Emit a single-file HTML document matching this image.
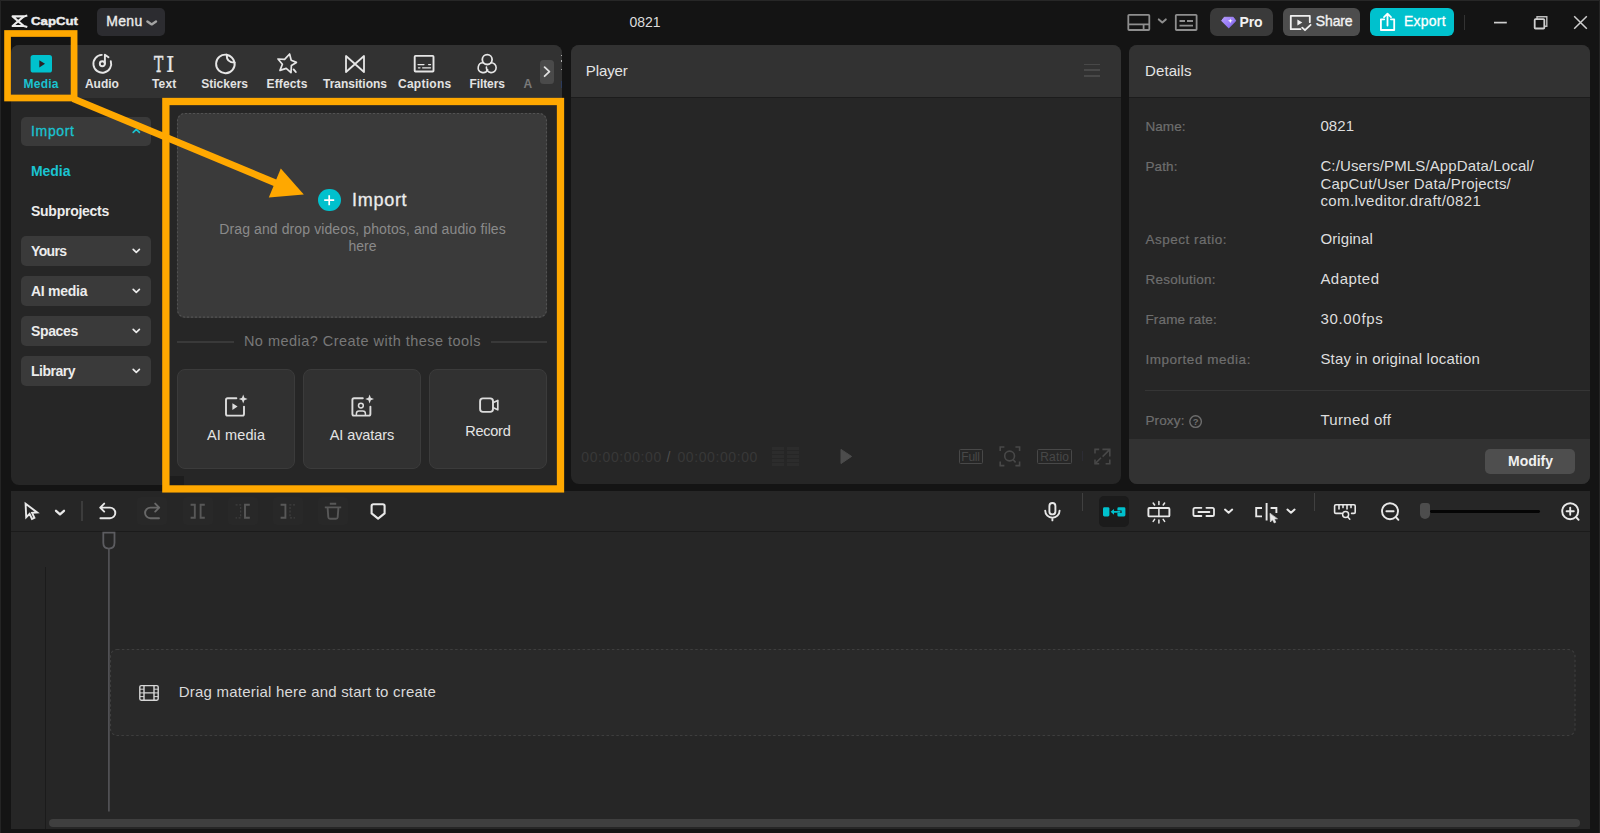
<!DOCTYPE html>
<html lang="en"><head><meta charset="utf-8"><title>CapCut - 0821</title>
<style>
html,body{margin:0;padding:0;}
body{width:1600px;height:833px;overflow:hidden;background:#141414;position:relative;font-family:"Liberation Sans",sans-serif;}
.a{position:absolute;box-sizing:border-box;}
.t{position:absolute;white-space:nowrap;line-height:20px;height:20px;}
svg{overflow:visible;}
</style></head><body>
<div class="a" style="left:0px;top:0px;width:1600px;height:1px;background:#272727;"></div>
<div class="a" style="left:0px;top:0px;width:1px;height:833px;background:#242424;"></div>
<div class="a" style="left:1599px;top:0px;width:1px;height:833px;background:#242424;"></div>
<svg class="a" style="left:0px;top:0px;" width="90" height="40" viewBox="0 0 90 40" fill="none"><g stroke="#ececec" stroke-width="2.1" stroke-linejoin="round" stroke-linecap="butt"><path d="M27.3 15.4 L23.8 16.4 H12.6 L23.8 26 L27.3 27"/><path d="M23.8 16.4 L12.6 26 H23.8"/></g></svg>
<div class="t" style="left:31.40px;top:10.61px;font-size:11.8px;color:#ececec;font-weight:bold;-webkit-text-stroke:0.45px #ececec;transform:scaleX(1.12);transform-origin:0 50%;">CapCut</div>
<div class="a" style="left:96.5px;top:8.3px;width:68.5px;height:27.7px;background:#2c2c30;border-radius:5px;"></div>
<div class="t" style="left:106.20px;top:11.45px;font-size:14px;color:#ececec;letter-spacing:0.326px;-webkit-text-stroke:0.35px #ececec;">Menu</div>
<svg class="a" style="left:0px;top:0px;" width="200" height="40" viewBox="0 0 200 40" fill="none"><path d="M147.4 21.4 L151.7 24.4 L156 21.4" stroke="#a4a4a4" stroke-width="2.4" stroke-linecap="round" stroke-linejoin="round"/></svg>
<div class="t" style="left:629.40px;top:11.75px;font-size:14px;color:#dcdcdc;letter-spacing:0.018px;">0821</div>
<svg class="a" style="left:1120px;top:0px;" width="90" height="40" viewBox="0 0 90 40" fill="none"><g stroke="#8e8e8e" stroke-width="1.8">
<rect x="8.3" y="14.8" width="21" height="15.2" rx="0.8"/>
<path d="M8.3 24.4 H29.3 M23.6 24.4 V30"/>
<path d="M38.8 19.4 L42.3 22.4 L45.8 19.4" stroke-width="2" stroke-linecap="round" stroke-linejoin="round"/>
<rect x="55.8" y="14.8" width="20.8" height="15.2" rx="0.8"/>
<path d="M59.5 21 H65 M67 21 H73 M59.5 25.6 H73"/>
</g></svg>
<div class="a" style="left:1210px;top:8.1px;width:62.5px;height:28.1px;background:#3a3a3a;border-radius:7px;"></div>
<svg class="a" style="left:1218px;top:12px;" width="22" height="20" viewBox="0 0 22 20" fill="none"><defs><linearGradient id="pg" x1="0" y1="0" x2="1" y2="1"><stop offset="0" stop-color="#b79cff"/><stop offset="1" stop-color="#7f63f0"/></linearGradient></defs>
<path d="M6.2 5.3 H15.2 L17.8 8.8 L10.7 15.9 L3.6 8.8 Z" fill="url(#pg)" stroke="url(#pg)" stroke-width="1" stroke-linejoin="round"/>
<path d="M12.3 6.4 L12.9 8.2 L14.7 8.8 L12.9 9.4 L12.3 11.2 L11.7 9.4 L9.9 8.8 L11.7 8.2 Z" fill="#fff"/></svg>
<div class="t" style="left:1239.60px;top:12.45px;font-size:14px;color:#f2f2f2;font-weight:bold;letter-spacing:-0.169px;">Pro</div>
<div class="a" style="left:1282.5px;top:8.1px;width:77.90000000000009px;height:28.1px;background:#4d4d4d;border-radius:6px;"></div>
<svg class="a" style="left:1286px;top:10px;" width="30" height="26" viewBox="0 0 30 26" fill="none"><g stroke="#f0f0f0" stroke-width="1.8" stroke-linejoin="round" stroke-linecap="round">
<path d="M14.5 19.2 H4.8 V5.8 H23.8 V12.2"/>
<path d="M16.2 17.6 L19 20.2 L24.6 14.8"/></g>
<path d="M11.4 9.6 L16.3 12.5 L11.4 15.4 Z" fill="#f0f0f0"/></svg>
<div class="t" style="left:1315.80px;top:11.45px;font-size:14px;color:#f2f2f2;letter-spacing:-0.140px;-webkit-text-stroke:0.35px #f2f2f2;">Share</div>
<div class="a" style="left:1370px;top:8.1px;width:84px;height:28.199999999999996px;background:#00c1cd;border-radius:6px;"></div>
<svg class="a" style="left:1376px;top:10px;" width="24" height="24" viewBox="0 0 24 24" fill="none"><g stroke="#fff" stroke-width="1.8" stroke-linejoin="round" stroke-linecap="round">
<path d="M8.2 9.3 H4.9 V20 H18.2 V9.3 H14.9"/><path d="M11.5 15.5 V3.8 M8 7.2 L11.5 3.7 L15 7.2"/></g></svg>
<div class="t" style="left:1403.90px;top:11.45px;font-size:14px;color:#ffffff;letter-spacing:0.268px;-webkit-text-stroke:0.3px #ffffff;">Export</div>
<div class="a" style="left:1464px;top:15px;width:1px;height:15px;background:#333333;"></div>
<svg class="a" style="left:1480px;top:0px;" width="120" height="40" viewBox="0 0 120 40" fill="none"><g stroke="#cfcfcf" stroke-width="1.5">
<path d="M14 22.6 H26.8" stroke-width="1.7"/>
<path d="M57 19.2 V16.8 H66.8 V26.2 H64.3" stroke-width="1.4" stroke="#bdbdbd"/>
<rect x="54.7" y="19.2" width="9.6" height="9.3" rx="0.8" stroke-width="1.8"/>
<path d="M94.2 16.2 L106.8 28.8 M106.8 16.2 L94.2 28.8"/>
</g></svg>
<div class="a" style="left:11px;top:45px;width:551px;height:440px;background:#262626;border-radius:8px;"></div>
<div class="a" style="left:11px;top:45px;width:551px;height:53px;background:#323232;border-radius:8px 8px 0 0;"></div>
<div class="t" style="left:23.50px;top:73.54px;font-size:12px;color:#1ac3d1;font-weight:bold;letter-spacing:0.248px;">Media</div>
<div class="t" style="left:85.00px;top:73.54px;font-size:12px;color:#e2e2e2;font-weight:bold;letter-spacing:-0.048px;">Audio</div>
<div class="t" style="left:151.95px;top:73.54px;font-size:12px;color:#e2e2e2;font-weight:bold;letter-spacing:0.172px;">Text</div>
<div class="t" style="left:201.20px;top:73.54px;font-size:12px;color:#e2e2e2;font-weight:bold;letter-spacing:0.014px;">Stickers</div>
<div class="t" style="left:266.50px;top:73.54px;font-size:12px;color:#e2e2e2;font-weight:bold;letter-spacing:0.131px;">Effects</div>
<div class="t" style="left:323.00px;top:73.54px;font-size:12px;color:#e2e2e2;font-weight:bold;">Transitions</div>
<div class="t" style="left:398.00px;top:73.54px;font-size:12px;color:#e2e2e2;font-weight:bold;letter-spacing:0.267px;">Captions</div>
<div class="t" style="left:469.40px;top:73.54px;font-size:12px;color:#e2e2e2;font-weight:bold;letter-spacing:-0.069px;">Filters</div>
<div class="t" style="left:523.60px;top:73.54px;font-size:12px;color:#7a7a7a;font-weight:bold;">A</div>
<svg class="a" style="left:0px;top:45px;" width="570" height="55" viewBox="0 0 570 55" fill="none">
<rect x="30.6" y="10" width="21.4" height="17.6" rx="2.6" fill="#00c1cd"/>
<path d="M39.3 15.2 L45 18.8 L39.3 22.4 Z" fill="#2a2226"/>
<g stroke="#e6e6e6" stroke-width="1.9" stroke-linecap="round" stroke-linejoin="round">
<!-- audio -->
<path d="M110.8 16.1 A8.9 8.9 0 1 1 101.8 9.9"/>
<circle cx="102.3" cy="18.8" r="2.5"/>
<path d="M104.9 18.8 V9.7 L108.5 12.3"/>
<!-- stickers -->
<path d="M226.6 9.7 A9.3 9.3 0 1 0 234.6 17.6"/>
<path d="M226.6 9.7 C226.6 14.6 229.4 17.6 234.6 17.6 C233.6 13.6 230.8 10.6 226.6 9.7 Z"/>
<!-- effects -->
<path d="M289.6 9 L291.2 15.2 L296.4 17.4 L291.4 20.4 L291 27.6 L286.2 23.4 L280 25.4 L282.4 19.2 L278 14 L284.6 14.4 Z" stroke-width="1.7"/>
<path d="M293.6 24.4 L295.8 27"/>
<!-- transitions -->
<path d="M346 11 V27 L364 11 V27 Z" stroke-width="1.8"/>
<!-- captions -->
<rect x="414.7" y="10.9" width="18.8" height="15.6" rx="0.8" stroke-width="1.9"/>
<path d="M418 19.6 H424 M428.6 19.6 H430.6 M418.4 22.8 H420 M422.6 22.8 H430.6" stroke-width="1.2"/>
<!-- filters -->
<circle cx="487.2" cy="14.6" r="4.9" stroke-width="1.8"/>
<path d="M483.4 17.8 A4.9 4.9 0 1 0 487.6 24.6" stroke-width="1.6"/>
<path d="M491 17.8 A4.9 4.9 0 1 1 486.4 22" stroke-width="1.6"/>
</g></svg>
<div class="t" style="left:153.9px;top:50.4px;font-family:'DejaVu Serif','Liberation Serif',serif;font-size:23.2px;color:#e6e6e6;height:28px;line-height:28px;transform:scaleX(0.6);transform-origin:0 50%;-webkit-text-stroke:0.45px #e6e6e6;">T</div>
<div class="t" style="left:165.9px;top:50.4px;font-family:'DejaVu Serif','Liberation Serif',serif;font-size:23.2px;color:#e6e6e6;height:28px;line-height:28px;transform:scaleX(0.92);transform-origin:0 50%;-webkit-text-stroke:0.15px #e6e6e6;">I</div>
<div class="a" style="left:539.5px;top:59.5px;width:14.5px;height:24.5px;background:#4a4a4a;border-radius:3.5px;"></div>
<svg class="a" style="left:539px;top:59px;" width="16" height="26" viewBox="0 0 16 26" fill="none"><path d="M5.6 8.2 L10.4 12.7 L5.6 17.2" stroke="#e0e0e0" stroke-width="1.8" stroke-linecap="round" stroke-linejoin="round"/></svg>
<div class="a" style="left:561px;top:55px;width:1.3999999999999773px;height:1.3999999999999986px;background:#b0b0b0;"></div>
<div class="a" style="left:561px;top:60.4px;width:1.3999999999999773px;height:1.3999999999999986px;background:#b0b0b0;"></div>
<div class="a" style="left:561px;top:68.6px;width:1.2000000000000455px;height:1.2000000000000028px;background:#a0a0a0;"></div>
<div class="a" style="left:561.2px;top:81px;width:1.1999999999999318px;height:6.599999999999994px;background:#2b3a5c;"></div>
<div class="a" style="left:21px;top:116.8px;width:130px;height:29.200000000000003px;background:#3a3a3a;border-radius:5px;"></div>
<div class="t" style="left:31.00px;top:121.15px;font-size:14px;color:#1ac3d1;letter-spacing:0.665px;-webkit-text-stroke:0.3px #1ac3d1;">Import</div>
<div class="t" style="left:31.00px;top:161.15px;font-size:14px;color:#1ac3d1;font-weight:bold;letter-spacing:-0.044px;">Media</div>
<div class="t" style="left:31.00px;top:201.15px;font-size:14px;color:#ececec;font-weight:bold;letter-spacing:-0.260px;">Subprojects</div>
<div class="a" style="left:21px;top:236.4px;width:130px;height:29.49999999999997px;background:#3a3a3a;border-radius:5px;"></div>
<div class="t" style="left:31.00px;top:241.15px;font-size:14px;color:#ececec;font-weight:bold;letter-spacing:-0.659px;">Yours</div>
<svg class="a" style="left:130px;top:237px;" width="14" height="29" viewBox="0 0 14 29" fill="none"><path d="M3.2 12.4 L6.3 15.3 L9.4 12.4" stroke="#ececec" stroke-width="1.7" stroke-linecap="round" stroke-linejoin="round"/></svg>
<div class="a" style="left:21px;top:276.4px;width:130px;height:29.5px;background:#3a3a3a;border-radius:5px;"></div>
<div class="t" style="left:31.00px;top:281.15px;font-size:14px;color:#ececec;font-weight:bold;letter-spacing:-0.265px;">AI media</div>
<svg class="a" style="left:130px;top:277px;" width="14" height="29" viewBox="0 0 14 29" fill="none"><path d="M3.2 12.4 L6.3 15.3 L9.4 12.4" stroke="#ececec" stroke-width="1.7" stroke-linecap="round" stroke-linejoin="round"/></svg>
<div class="a" style="left:21px;top:316.4px;width:130px;height:29.5px;background:#3a3a3a;border-radius:5px;"></div>
<div class="t" style="left:31.00px;top:321.15px;font-size:14px;color:#ececec;font-weight:bold;letter-spacing:-0.367px;">Spaces</div>
<svg class="a" style="left:130px;top:317px;" width="14" height="29" viewBox="0 0 14 29" fill="none"><path d="M3.2 12.4 L6.3 15.3 L9.4 12.4" stroke="#ececec" stroke-width="1.7" stroke-linecap="round" stroke-linejoin="round"/></svg>
<div class="a" style="left:21px;top:356.4px;width:130px;height:29.5px;background:#3a3a3a;border-radius:5px;"></div>
<div class="t" style="left:31.00px;top:361.15px;font-size:14px;color:#ececec;font-weight:bold;letter-spacing:-0.494px;">Library</div>
<svg class="a" style="left:130px;top:357px;" width="14" height="29" viewBox="0 0 14 29" fill="none"><path d="M3.2 12.4 L6.3 15.3 L9.4 12.4" stroke="#ececec" stroke-width="1.7" stroke-linecap="round" stroke-linejoin="round"/></svg>
<svg class="a" style="left:130px;top:117px;" width="14" height="29" viewBox="0 0 14 29" fill="none"><path d="M3.2 15.3 L6.3 12.4 L9.4 15.3" stroke="#1ac3d1" stroke-width="1.7" stroke-linecap="round" stroke-linejoin="round"/></svg>
<div class="a" style="left:177px;top:113px;width:370px;height:204.60000000000002px;background:#3a3a3a;border-radius:8px;"></div>
<svg class="a" style="left:177px;top:113px;" width="370" height="205" viewBox="0 0 370 205" fill="none"><rect x="0.5" y="0.5" width="369" height="203.6" rx="7.5" stroke="#525252" stroke-width="1.1" stroke-dasharray="2 2"/></svg>
<div class="a" style="left:318.3px;top:188.8px;width:22.4px;height:22.4px;border-radius:50%;background:#00c1cd;"></div>
<svg class="a" style="left:318.3px;top:188.8px;" width="22.4" height="22.4" viewBox="0 0 22.4 22.4" fill="none"><path d="M11.2 6.2 V16.2 M6.2 11.2 H16.2" stroke="#fff" stroke-width="1.7"/></svg>
<div class="t" style="left:352.00px;top:190.16px;font-size:18px;color:#ececec;letter-spacing:0.718px;-webkit-text-stroke:0.3px #ececec;">Import</div>
<div class="t" style="left:219.25px;top:219.15px;font-size:14px;color:#8a8a8a;letter-spacing:0.108px;">Drag and drop videos, photos, and audio files</div>
<div class="t" style="left:348.50px;top:235.65px;font-size:14px;color:#8a8a8a;letter-spacing:-0.007px;">here</div>
<div class="a" style="left:177px;top:340.5px;width:57px;height:2.0px;background:#393939;"></div>
<div class="a" style="left:490.5px;top:340.5px;width:56.5px;height:2.0px;background:#393939;"></div>
<div class="t" style="left:243.95px;top:331.18px;font-size:14.5px;color:#787878;letter-spacing:0.464px;">No media? Create with these tools</div>
<div class="a" style="left:177px;top:368.8px;width:118px;height:100.09999999999997px;background:#313131;border-radius:8px;border:1px solid #3b3b3b;"></div>
<div class="t" style="left:207.00px;top:425.38px;font-size:14.5px;color:#e4e4e4;letter-spacing:0.111px;">AI media</div>
<div class="a" style="left:303px;top:368.8px;width:118px;height:100.09999999999997px;background:#313131;border-radius:8px;border:1px solid #3b3b3b;"></div>
<div class="t" style="left:329.80px;top:425.38px;font-size:14.5px;color:#e4e4e4;letter-spacing:-0.098px;">AI avatars</div>
<div class="a" style="left:429px;top:368.8px;width:118px;height:100.09999999999997px;background:#313131;border-radius:8px;border:1px solid #3b3b3b;"></div>
<div class="t" style="left:465.25px;top:421.48px;font-size:14.5px;color:#e4e4e4;letter-spacing:-0.249px;">Record</div>
<svg class="a" style="left:177px;top:369px;" width="370" height="100" viewBox="0 0 370 100" fill="none"><g stroke="#dcdcdc" stroke-width="1.9" stroke-linejoin="round" stroke-linecap="round">
<path d="M59.4 29.3 H50.6 Q49 29.3 49 30.9 V45 Q49 46.6 50.6 46.6 H65.4 Q67 46.6 67 45 V37.6"/>
<path d="M185.8 29.3 H177 Q175.4 29.3 175.4 30.9 V45 Q175.4 46.6 177 46.6 H191.8 Q193.4 46.6 193.4 45 V37.6"/>
<circle cx="183.9" cy="36.6" r="2.4" stroke-width="1.5"/>
<path d="M179.4 46.2 V44.6 Q179.4 42 182 42 H185.8 Q188.4 42 188.4 44.6 V46.2" stroke-width="1.5"/>
<rect x="303.1" y="29.4" width="12.9" height="13.5" rx="2.8" stroke-width="1.9"/>
<path d="M316.4 33.4 L320.8 31.4 V40.8 L316.4 38.8" stroke-width="1.7"/>
</g>
<path d="M55.4 34.2 L60.6 37.6 L55.4 41 Z" fill="#dcdcdc"/>
<path d="M66.2 25.6 L67.4 28.8 L70.6 30 L67.4 31.2 L66.2 34.4 L65 31.2 L61.8 30 L65 28.8 Z" fill="#dcdcdc"/>
<path d="M192.6 25.6 L193.8 28.8 L197 30 L193.8 31.2 L192.6 34.4 L191.4 31.2 L188.2 30 L191.4 28.8 Z" fill="#dcdcdc"/>
</svg>
<div class="a" style="left:170px;top:476px;width:14px;height:9px;background:#1d1d1d;"></div>
<div class="a" style="left:571px;top:45px;width:550px;height:439px;background:#262626;border-radius:8px;"></div>
<div class="a" style="left:571px;top:45px;width:550px;height:52px;background:#323232;border-radius:8px 8px 0 0;"></div>
<div class="a" style="left:571px;top:97px;width:550px;height:1px;background:#1c1c1c;"></div>
<div class="t" style="left:585.80px;top:61.20px;font-size:15px;color:#e4e4e4;letter-spacing:-0.103px;">Player</div>
<div class="a" style="left:1084.4px;top:63.6px;width:16.0px;height:1.6000000000000014px;background:#484848;"></div>
<div class="a" style="left:1084.4px;top:69.4px;width:16.0px;height:1.5999999999999943px;background:#484848;"></div>
<div class="a" style="left:1084.4px;top:75.2px;width:16.0px;height:1.5999999999999943px;background:#484848;"></div>
<div class="t" style="left:581.30px;top:446.75px;font-size:14px;color:#383838;letter-spacing:0.604px;">00:00:00:00</div>
<div class="t" style="left:666.40px;top:446.75px;font-size:14px;color:#505050;">/</div>
<div class="t" style="left:677.40px;top:446.75px;font-size:14px;color:#383838;letter-spacing:0.604px;">00:00:00:00</div>
<div class="a" style="left:772px;top:447px;width:12px;height:2.5px;background:#2c2c2c;"></div>
<div class="a" style="left:787px;top:447px;width:12px;height:2.5px;background:#2c2c2c;"></div>
<div class="a" style="left:772px;top:451px;width:12px;height:2.5px;background:#2c2c2c;"></div>
<div class="a" style="left:787px;top:451px;width:12px;height:2.5px;background:#2c2c2c;"></div>
<div class="a" style="left:772px;top:455px;width:12px;height:2.5px;background:#2c2c2c;"></div>
<div class="a" style="left:787px;top:455px;width:12px;height:2.5px;background:#2c2c2c;"></div>
<div class="a" style="left:772px;top:459px;width:12px;height:2.5px;background:#2c2c2c;"></div>
<div class="a" style="left:787px;top:459px;width:12px;height:2.5px;background:#2c2c2c;"></div>
<div class="a" style="left:772px;top:463px;width:12px;height:2.5px;background:#2c2c2c;"></div>
<div class="a" style="left:787px;top:463px;width:12px;height:2.5px;background:#2c2c2c;"></div>
<svg class="a" style="left:838px;top:446px;" width="18" height="22" viewBox="0 0 18 22" fill="none"><path d="M3 3.4 L13.6 10.4 L3 17.6 Z" fill="#4c4c4c" stroke="#4c4c4c" stroke-width="1" stroke-linejoin="round"/></svg>
<div class="a" style="left:958.5px;top:449px;width:24px;height:15px;border:1px solid #484848;border-radius:1.5px;"></div>
<div class="t" style="left:961.30px;top:446.84px;font-size:12px;color:#484848;letter-spacing:-0.245px;">Full</div>
<div class="a" style="left:1037.3px;top:449px;width:34.6px;height:15px;border:1px solid #484848;border-radius:1.5px;"></div>
<div class="t" style="left:1040.30px;top:446.84px;font-size:12px;color:#484848;letter-spacing:0.147px;">Ratio</div>
<svg class="a" style="left:995px;top:440px;" width="125" height="32" viewBox="0 0 125 32" fill="none"><g stroke="#484848" stroke-width="1.6" stroke-linecap="butt" stroke-linejoin="miter">
<path d="M5.2 11 V7 H9.4 M20.4 7 H24.6 V11 M24.6 21.4 V25.6 H20.4 M9.4 25.6 H5.2 V21.4"/>
<circle cx="14.6" cy="16" r="4.9"/><path d="M18.2 19.8 L20.6 22.4"/>
<path d="M100 13.6 V9.4 H104.2 M114.8 19.4 V23.8 H110.6 M100 19.4 V23.8 H104.2"/>
<path d="M107.4 9.4 H114.8 V16.4 M114.6 9.6 L107.6 16.6 M100.4 23.4 L106 17.8"/>
</g></svg>
<div class="a" style="left:1082px;top:451px;width:1px;height:10px;background:#2c2c34;"></div>
<div class="a" style="left:1129.3px;top:45px;width:460.70000000000005px;height:439px;background:#262626;border-radius:8px;"></div>
<div class="a" style="left:1129.3px;top:45px;width:460.70000000000005px;height:52px;background:#323232;border-radius:8px 8px 0 0;"></div>
<div class="a" style="left:1129.3px;top:97px;width:460.70000000000005px;height:1px;background:#1c1c1c;"></div>
<div class="t" style="left:1145.00px;top:61.20px;font-size:15px;color:#e4e4e4;letter-spacing:0.108px;">Details</div>
<div class="t" style="left:1145.40px;top:117.12px;font-size:13.5px;color:#6e6e6e;letter-spacing:0.110px;-webkit-text-stroke:0.2px #6e6e6e;">Name:</div>
<div class="t" style="left:1320.40px;top:116.20px;font-size:15px;color:#dedede;letter-spacing:0.077px;">0821</div>
<div class="t" style="left:1145.40px;top:157.32px;font-size:13.5px;color:#6e6e6e;letter-spacing:0.119px;-webkit-text-stroke:0.2px #6e6e6e;">Path:</div>
<div class="t" style="left:1320.40px;top:156.30px;font-size:15px;color:#dedede;letter-spacing:0.130px;">C:/Users/PMLS/AppData/Local/</div>
<div class="t" style="left:1320.40px;top:173.80px;font-size:15px;color:#dedede;letter-spacing:0.213px;">CapCut/User Data/Projects/</div>
<div class="t" style="left:1320.40px;top:191.20px;font-size:15px;color:#dedede;letter-spacing:0.393px;">com.lveditor.draft/0821</div>
<div class="t" style="left:1145.40px;top:229.92px;font-size:13.5px;color:#6e6e6e;letter-spacing:0.497px;-webkit-text-stroke:0.2px #6e6e6e;">Aspect ratio:</div>
<div class="t" style="left:1320.40px;top:229.00px;font-size:15px;color:#dedede;letter-spacing:0.102px;">Original</div>
<div class="t" style="left:1145.40px;top:269.92px;font-size:13.5px;color:#6e6e6e;letter-spacing:0.246px;-webkit-text-stroke:0.2px #6e6e6e;">Resolution:</div>
<div class="t" style="left:1320.40px;top:269.00px;font-size:15px;color:#dedede;letter-spacing:0.453px;">Adapted</div>
<div class="t" style="left:1145.40px;top:310.02px;font-size:13.5px;color:#6e6e6e;letter-spacing:0.163px;-webkit-text-stroke:0.2px #6e6e6e;">Frame rate:</div>
<div class="t" style="left:1320.40px;top:309.10px;font-size:15px;color:#dedede;letter-spacing:0.693px;">30.00fps</div>
<div class="t" style="left:1145.40px;top:350.32px;font-size:13.5px;color:#6e6e6e;letter-spacing:0.532px;-webkit-text-stroke:0.2px #6e6e6e;">Imported media:</div>
<div class="t" style="left:1320.40px;top:349.30px;font-size:15px;color:#dedede;letter-spacing:0.214px;">Stay in original location</div>
<div class="a" style="left:1145px;top:390px;width:445px;height:1px;background:#353535;"></div>
<div class="t" style="left:1145.40px;top:411.22px;font-size:13.5px;color:#6e6e6e;letter-spacing:0.148px;-webkit-text-stroke:0.2px #6e6e6e;">Proxy:</div>
<svg class="a" style="left:1188px;top:412px;" width="16" height="18" viewBox="0 0 16 18" fill="none"><circle cx="7.6" cy="9.6" r="5.8" stroke="#6e6e6e" stroke-width="1.4"/></svg>
<div class="t" style="left:1192.80px;top:411.71px;font-size:9.5px;color:#6e6e6e;font-weight:bold;">?</div>
<div class="t" style="left:1320.40px;top:410.20px;font-size:15px;color:#dedede;letter-spacing:0.340px;">Turned off</div>
<div class="a" style="left:1129.3px;top:439.2px;width:460.70000000000005px;height:44.80000000000001px;background:#323232;border-radius:0 0 8px 8px;"></div>
<div class="a" style="left:1485.3px;top:448.9px;width:90.0px;height:25.200000000000045px;background:#4e4e4e;border-radius:5px;"></div>
<div class="t" style="left:1508.00px;top:450.95px;font-size:14px;color:#f0f0f0;font-weight:bold;letter-spacing:-0.021px;">Modify</div>
<div class="a" style="left:11px;top:491px;width:1579px;height:338px;background:#262626;"></div>
<div class="a" style="left:11px;top:531px;width:1579px;height:1px;background:#1b1b1b;"></div>
<div class="a" style="left:45px;top:567px;width:1px;height:262px;background:#1b1b1b;"></div>
<div class="a" style="left:137px;top:497px;width:30px;height:28px;background:#282828;border-radius:4px;"></div>
<div class="a" style="left:183px;top:497px;width:30px;height:28px;background:#282828;border-radius:4px;"></div>
<div class="a" style="left:228px;top:497px;width:30px;height:28px;background:#282828;border-radius:4px;"></div>
<div class="a" style="left:273px;top:497px;width:30px;height:28px;background:#282828;border-radius:4px;"></div>
<div class="a" style="left:318px;top:497px;width:30px;height:28px;background:#282828;border-radius:4px;"></div>
<svg class="a" style="left:11px;top:491px;" width="400" height="41" viewBox="0 0 400 41" fill="none"><g stroke-linecap="round" stroke-linejoin="round" stroke-width="1.9">
<path d="M14.6 12.8 L15.2 26.2 L18.6 22.8 L21 28 L23.4 26.9 L21.1 21.8 L26.2 21.4 Z" stroke="#e8e8e8" stroke-linejoin="miter"/>
<path d="M45 19.8 L49 23.4 L53 19.8" stroke="#e8e8e8" stroke-width="2.3"/>
<path d="M93.2 12.6 L89.2 16.6 L93.2 20.6 M89.6 16.6 H99 A5.3 5.3 0 0 1 99 27.2 H89.4" stroke="#e8e8e8"/>
<path d="M144.2 12.6 L148.2 16.6 L144.2 20.6 M147.8 16.6 H139.4 A5.3 5.3 0 0 0 139.4 27.2 H148" stroke="#686868"/>
<g stroke="#585858" stroke-linejoin="miter" stroke-linecap="butt">
<path d="M179.6 13.8 H183.8 V26.8 H179.6 M193.8 13.8 H189.6 V26.8 H193.8"/>
<path d="M238.8 13.8 H234 V26.8 H238.8"/>
<path d="M224.6 13.8 H229.6 V26.8 H224.6" stroke-dasharray="2 1.6" stroke-width="1.3" stroke="#3e3e3e"/>
<path d="M269.6 13.8 H274.4 V26.8 H269.6"/>
<path d="M284 13.8 H279 V26.8 H284" stroke-dasharray="2 1.6" stroke-width="1.3" stroke="#3e3e3e"/>
<path d="M318.8 12.8 H325.2 M313.8 16.4 H330.2 M316.6 16.8 L317.3 26.2 Q317.4 27.8 319 27.8 H325 Q326.6 27.8 326.7 26.2 L327.4 16.8" stroke-linejoin="round"/>
</g>
<path d="M362.4 13.2 H371.8 Q373.6 13.2 373.6 15 V22.4 L367.1 27.6 L360.6 22.4 V15 Q360.6 13.2 362.4 13.2 Z" stroke="#e8e8e8" stroke-width="2.1"/>
</g></svg>
<div class="a" style="left:81.4px;top:501.4px;width:1.1999999999999886px;height:19.200000000000045px;background:#3c3c3c;"></div>
<svg class="a" style="left:100px;top:531px;" width="18" height="282" viewBox="0 0 18 282" fill="none"><path d="M3.3 1.6 H14.5 V11.8 Q14.5 17.6 8.9 17.6 Q3.3 17.6 3.3 11.8 Z" stroke="#5c5c60" stroke-width="1.8"/><path d="M8.9 17.6 V280.4" stroke="#56565a" stroke-width="1.6"/></svg>
<div class="a" style="left:109.5px;top:649px;width:1465.5px;height:87px;background:#292929;border-radius:7px;"></div>
<svg class="a" style="left:109.5px;top:649px;" width="1466" height="87" viewBox="0 0 1466 87" fill="none"><rect x="0.5" y="0.5" width="1464.5" height="86" rx="6.5" stroke="#3e3e3e" stroke-width="1.1" stroke-dasharray="2.5 2.4"/></svg>
<svg class="a" style="left:136px;top:680px;" width="26" height="26" viewBox="0 0 26 26" fill="none"><g stroke="#d6d6d6" stroke-width="1.4"><rect x="3.8" y="5.6" width="18.4" height="14.6" rx="1.4"/>
<path d="M8 5.6 V20.2 M18 5.6 V20.2 M8 12.9 H18"/><path d="M4 9.2 H8 M4 12.9 H8 M4 16.6 H8 M18 9.2 H22 M18 12.9 H22 M18 16.6 H22" stroke-width="1"/></g></svg>
<div class="t" style="left:178.80px;top:682.40px;font-size:15px;color:#dadada;letter-spacing:0.208px;">Drag material here and start to create</div>
<div class="a" style="left:48.5px;top:819px;width:1531.5px;height:8px;background:#3f3f3f;border-radius:4px;"></div>
<svg class="a" style="left:1030px;top:491px;" width="560" height="41" viewBox="0 0 560 41" fill="none"><g stroke-linecap="round" stroke-linejoin="round" stroke-width="1.9" stroke="#e8e8e8">
<rect x="19.4" y="12" width="6" height="11.4" rx="3"/>
<path d="M15.2 19.6 A7.2 7.2 0 0 0 29.6 19.6 M22.4 26.8 V29.4"/>
<!-- snap -->
<rect x="118.4" y="17" width="21" height="8.4" rx="1"/>
<path d="M128.9 17 V25.4 M128.9 10.4 V13.4 M128.9 29 V32 M123.2 12 L124.6 14 M134.6 12 L133.2 14 M123.2 30.4 L124.6 28.4 M134.6 30.4 L133.2 28.4" stroke-width="1.5"/>
<!-- link -->
<path d="M171.4 16.8 H165 Q163.4 16.8 163.4 18.4 V23.4 Q163.4 25 165 25 H171.4 M176.4 16.8 H182.4 Q184 16.8 184 18.4 V23.4 Q184 25 182.4 25 H176.4 M168.4 21 H179.4" stroke-width="1.8"/>
<path d="M195 18.6 L198.6 21.8 L202.2 18.6" stroke-width="2"/>
<!-- split cursor -->
<path d="M232 17 H226.2 V25.4 H232 M236.6 12 V29.6 M240.6 17 H246.4 V22" stroke-linejoin="miter" stroke-linecap="butt"/>
<path d="M240 22.6 L240.4 31 L242.6 28.8 L244.2 32 L245.8 31.2 L244.3 28.1 L247.2 27.8 Z" fill="#e8e8e8" stroke-width="0.6"/>
<path d="M257.4 18.6 L261 21.8 L264.6 18.6" stroke-width="2"/>
<!-- ruler search -->
<path d="M311.4 22.4 H305.8 Q304.6 22.4 304.6 21.2 V15 Q304.6 13.8 305.8 13.8 H324 Q325.2 13.8 325.2 15 V21.2 Q325.2 22.4 324 22.4 H321.6 M309 14 V18 M313 14 V16.6 M317 14 V18 M321 14 V16.6" stroke-width="1.6"/>
<circle cx="315.6" cy="23.6" r="3" stroke-width="1.5"/><path d="M317.8 26 L319.8 28.2" stroke-width="1.5"/>
<!-- zoom out -->
<circle cx="360" cy="20.2" r="8"/><path d="M356.4 20.2 H363.6 M365.8 26 L368.4 28.8"/>
<!-- zoom in -->
<circle cx="540.2" cy="20.2" r="8"/><path d="M536.6 20.2 H543.8 M540.2 16.6 V23.8 M546 26 L548.6 28.8"/>
</g></svg>
<div class="a" style="left:1082px;top:492.5px;width:1.2999999999999545px;height:18.5px;background:#404040;"></div>
<div class="a" style="left:1314px;top:492.5px;width:1.2999999999999545px;height:18.5px;background:#404040;"></div>
<div class="a" style="left:1098.8px;top:496px;width:30.0px;height:30.5px;background:#1b1b1b;border-radius:5px;"></div>
<svg class="a" style="left:1098.8px;top:496px;" width="30" height="30.5" viewBox="0 0 30 30.5" fill="none"><g fill="#00c1cd"><rect x="4" y="11.2" width="6.4" height="9.2" rx="1.4"/>
<path d="M19.6 11.2 H25 Q26.4 11.2 26.4 12.6 V19 Q26.4 20.4 25 20.4 H19.6 Q18.4 20.4 18.4 19.2 V17 H22.6 V14.6 H18.4 V12.4 Q18.4 11.2 19.6 11.2 Z"/>
<path d="M11.6 15.8 L15 12.9 V14.9 H21.4 V16.7 H15 V18.7 Z"/></g></svg>
<div class="a" style="left:1430px;top:510.2px;width:110.40000000000009px;height:2.8000000000000114px;background:#050505;border-radius:1.4px;"></div>
<div class="a" style="left:1419.8px;top:503.4px;width:10.200000000000045px;height:15.399999999999977px;background:#4d4d4d;border-radius:3px 3px 5px 5px;"></div>
<svg class="a" style="left:0px;top:0px;" width="1600" height="833" viewBox="0 0 1600 833" fill="none"><g stroke="#ffa800" stroke-width="7.3" fill="none">
<rect x="7.55" y="33.5" width="66.55" height="64.5" stroke-width="6.7"/>
<rect x="165.85" y="101.5" width="394.65" height="387.4"/>
<path d="M73 98.6 L278 184" stroke-width="6.9"/></g>
<path d="M303.8 194.4 L280.8 168.4 L268.8 197.5 Z" fill="#ffa800"/></svg>
</body></html>
